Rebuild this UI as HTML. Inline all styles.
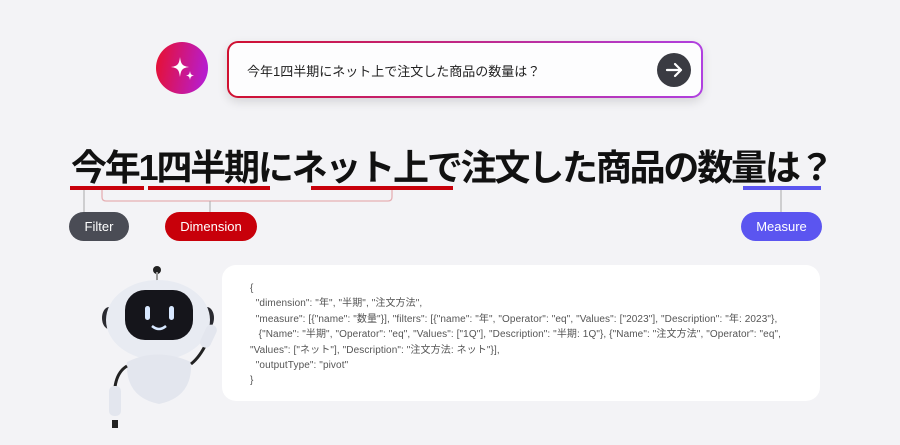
<!DOCTYPE html>
<html><head><meta charset="utf-8"><style>
body{margin:0;width:900px;height:445px;background:#f3f3f6;position:relative;overflow:hidden;font-family:"Liberation Sans","Noto Sans CJK JP",sans-serif}
.abs{position:absolute}
.icon{left:156px;top:42px;width:52px;height:52px;border-radius:50%;background:linear-gradient(100deg,#e8102c,#b21ee0)}
.box{left:227px;top:41px;width:476px;height:57px;border-radius:11px;background:linear-gradient(90deg,#d01030,#b040e0);box-shadow:0 4px 10px rgba(0,0,0,.12)}
.box .in{position:absolute;left:2px;top:2px;right:2px;bottom:2px;background:#fdfdfe;border-radius:9px}
.q{left:247px;top:61px;font-size:13px;color:#222}
.btn{left:657px;top:53px;width:34px;height:34px;border-radius:50%;background:#3a3b42}
.title{left:71px;top:139px;font-size:36px;font-weight:bold;color:#111;letter-spacing:-2.2px;white-space:nowrap}
.ul{height:4px;top:186px}
.pill{top:212px;height:29px;border-radius:15px;color:#fff;font-size:13px;text-align:center;line-height:29px}
.card{left:222px;top:265px;width:598px;height:136px;background:#fff;border-radius:14px}
.code{left:250px;top:281px;font-size:10px;line-height:15.4px;color:#555;white-space:pre;letter-spacing:0.1px}
</style></head><body>
<div class="abs icon"><svg width="52" height="52"><path d="M24 15 C25 22 26 24 33 25 C26 26 25 28 24 35 C23 28 22 26 15 25 C22 24 23 22 24 15Z" fill="#fff"/><path d="M34 29 C34.5 32 35 33 38 33.5 C35 34 34.5 35 34 38 C33.5 35 33 34 30 33.5 C33 33 33.5 32 34 29Z" fill="#fff"/></svg></div>
<div class="abs box"><div class="in"></div></div>
<div class="abs q">今年1四半期にネット上で注文した商品の数量は？</div>
<div class="abs btn"><svg width="34" height="34"><path d="M10 17H24M18 11L24 17L18 23" stroke="#fff" stroke-width="2.2" fill="none" stroke-linecap="round" stroke-linejoin="round"/></svg></div>
<div class="abs title">今年1四半期にネット上で注文した商品の数量は？</div>
<div class="abs ul" style="left:70px;width:74px;background:#c8000a"></div>
<div class="abs ul" style="left:148px;width:122px;background:#c8000a"></div>
<div class="abs ul" style="left:311px;width:142px;background:#c8000a"></div>
<div class="abs ul" style="left:743px;width:78px;background:#5b55f0"></div>
<svg class="abs" style="left:0;top:0" width="900" height="260"><path d="M102 190V197Q102 201 106 201H388Q392 201 392 197V190" stroke="#e6b0b4" stroke-width="1.3" fill="none"/><path d="M84 190V212M210 201V212M781 190V212" stroke="#aaa" stroke-width="1"/></svg>
<div class="abs pill" style="left:69px;width:60px;background:#4a4c55">Filter</div>
<div class="abs pill" style="left:165px;width:92px;background:#c8000a">Dimension</div>
<div class="abs pill" style="left:741px;width:81px;background:#5b55f0">Measure</div>
<div class="abs card"></div>
<div class="abs code">{
  "dimension": "年", "半期", "注文方法",
  "measure": [{"name": "数量"}], "filters": [{"name": "年", "Operator": "eq", "Values": ["2023"], "Description": "年: 2023"},
   {"Name": "半期", "Operator": "eq", "Values": ["1Q"], "Description": "半期: 1Q"}, {"Name": "注文方法", "Operator": "eq",
"Values": ["ネット"], "Description": "注文方法: ネット"}],
  "outputType": "pivot"
}</div>
<svg class="abs" style="left:95px;top:262px" width="140" height="175">
<circle cx="62" cy="8" r="4" fill="#222"/><path d="M62 10V22" stroke="#999" stroke-width="2"/>
<ellipse cx="14" cy="56" rx="7" ry="11" fill="#2a2a30"/><ellipse cx="112" cy="56" rx="7" ry="11" fill="#2a2a30"/>
<ellipse cx="63" cy="58" rx="52" ry="40" fill="#e8ebf2"/>
<rect x="30" y="28" width="68" height="50" rx="20" fill="#15151b"/>
<rect x="50" y="44" width="5" height="14" rx="2.5" fill="#d8e8ff"/><rect x="74" y="44" width="5" height="14" rx="2.5" fill="#d8e8ff"/>
<path d="M57 64Q64 70 71 64" stroke="#d8e8ff" stroke-width="2.5" fill="none"/>
<path d="M32 100Q62 85 96 100Q98 135 64 142Q30 135 32 100Z" fill="#e3e6ee"/>
<path d="M32 104Q22 110 20 125" stroke="#222" stroke-width="3" fill="none"/>
<rect x="14" y="124" width="12" height="30" rx="5" fill="#e3e6ee"/><rect x="17" y="158" width="6" height="8" fill="#222"/>
<path d="M96 102Q105 95 112 80" stroke="#222" stroke-width="3" fill="none"/>
<rect x="108" y="62" width="11" height="24" rx="5" fill="#e3e6ee" transform="rotate(25 113 74)"/>
</svg>
</body></html>
